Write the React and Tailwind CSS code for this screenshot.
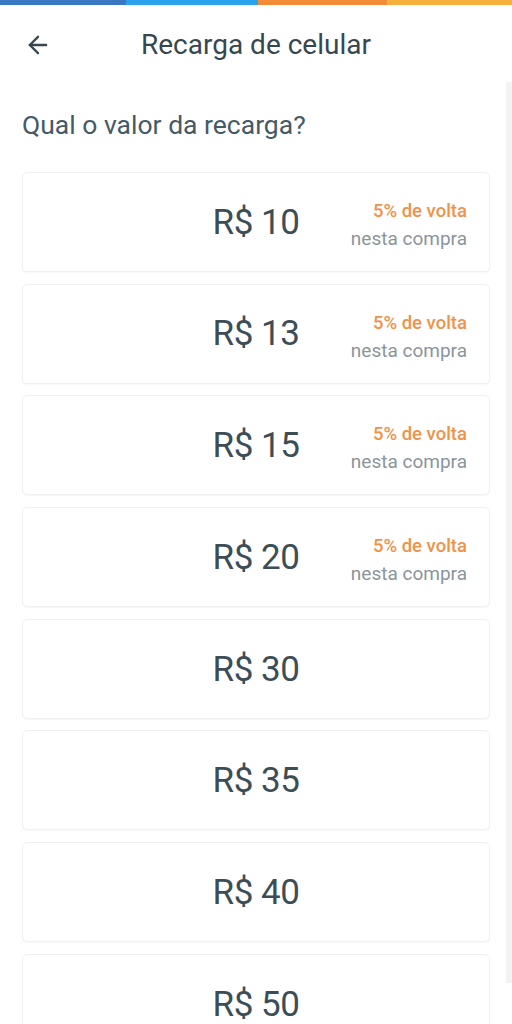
import { ArrowLeft } from "lucide-react";

const valores = [
  { valor: 10, cashback: true },
  { valor: 13, cashback: true },
  { valor: 15, cashback: true },
  { valor: 20, cashback: true },
  { valor: 30 },
  { valor: 35 },
  { valor: 40 },
  { valor: 50 },
];

export default function App() {
  return (
    <div className="min-h-screen bg-white font-['Roboto',sans-serif] text-[#37474f] overflow-hidden h-[1024px] relative">
      {/* barra de cores */}
      <div className="flex h-[5px]">
        <div className="w-[126px] bg-[#3a78c2]" />
        <div className="w-[132px] bg-[#2aa3ea]" />
        <div className="w-[129px] bg-[#f48c37]" />
        <div className="flex-1 bg-[#f6b03c]" />
      </div>

      {/* HEADER */}
      <div className="flex items-center h-[80px] px-[24px] relative">
        <ArrowLeft size={28} strokeWidth={2} className="text-[#37474f]" />
        <h1 className="absolute left-0 right-0 text-center text-[28px] text-[#37474f] pointer-events-none">
          Recarga de celular
        </h1>
      </div>

      <div className="px-[22px]">
        <h2 className="text-[26.5px] text-[#455a64] mt-[22px] mb-[29px] leading-[36px]">
          Qual o valor da recarga?
        </h2>

        <div className="flex flex-col gap-[11.7px]">
          {valores.map(v => (
            <div
              key={v.valor}
              className="grid grid-cols-[1fr_auto_1fr] items-center h-[100px] bg-white border border-[#eef0f2] rounded-[5px] shadow-[0_1px_2px_rgba(0,0,0,0.04)] px-[22px]"
            >
              <div />
              <span className="text-[35px] tracking-[-0.5px] text-[#3d4d55] mt-[2px]">
                R$ {v.valor}
              </span>
              {v.cashback ? (
                <div className="justify-self-end text-right leading-[28px] mt-[6px]">
                  <div className="text-[18.5px] font-medium text-[#f0924a]">5% de volta</div>
                  <div className="text-[19px] text-[#8a959b]">nesta compra</div>
                </div>
              ) : (
                <div />
              )}
            </div>
          ))}
        </div>
      </div>

      {/* scrollbar */}
      <div className="absolute right-0 top-[82px] w-[6px] h-[901px] bg-[#f2f3f5]" />
    </div>
  );
}
